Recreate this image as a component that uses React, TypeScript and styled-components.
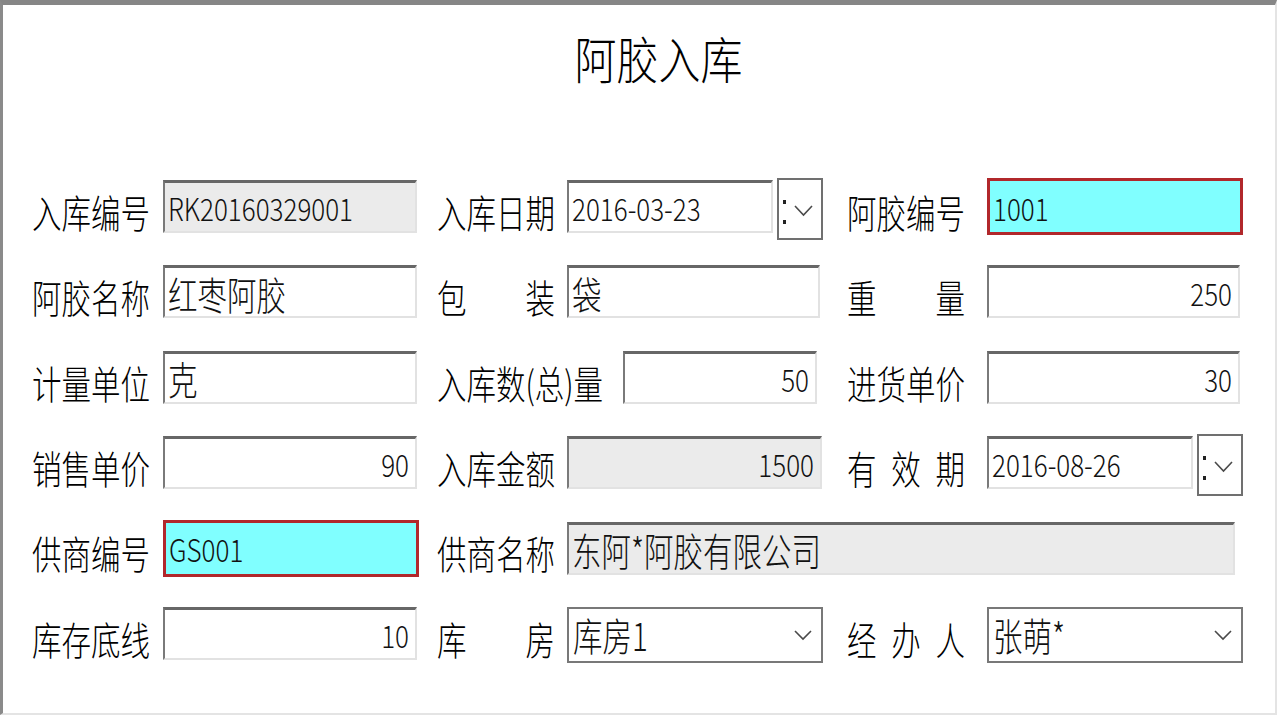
import React from "react";
import styled, { createGlobalStyle } from "styled-components";

const GlobalStyle = createGlobalStyle`
  html, body { margin: 0; padding: 0; background: #fff; }
  body { font-family: "Noto Sans CJK SC", "Liberation Sans", sans-serif; font-weight: 300; color: #000; }
`;

const Screen = styled.div`
  width: 1280px;
  height: 720px;
  background: #fff;
  overflow: hidden;
`;

const Window = styled.div`
  width: 1277px;
  height: 715px;
  box-sizing: border-box;
  border-top: 5px solid #868686;
  border-left: 3px solid #8a8a8a;
  border-right: 2px solid #e4e4e4;
  border-bottom: 2px solid #e4e4e4;
  display: flex;
  flex-direction: column;
`;

const Header = styled.div`
  height: 175px;
  box-sizing: border-box;
  display: flex;
  justify-content: center;
  padding-left: 39px;
  padding-top: 30px;
`;

const Title = styled.h1`
  margin: 0;
  font-size: 42px;
  font-weight: 300;
  line-height: 60px;
  letter-spacing: 0;
  transform: scaleY(1.18);
`;

const Form = styled.div`
  display: grid;
  grid-template-columns: 405px 410px 396px;
  grid-auto-rows: 53px;
  row-gap: 32.4px;
  padding-left: 29px;
`;

const Cell = styled.div<{ $pr: number; $span?: number }>`
  display: flex;
  align-items: center;
  min-width: 0;
  padding-right: ${(p) => p.$pr}px;
  grid-column: span ${(p) => p.$span ?? 1};
`;

const Label = styled.div<{ $w: number }>`
  flex: 0 0 ${(p) => p.$w}px;
  align-self: stretch;
  display: flex;
  align-items: center;
  padding-top: 10px;
  box-sizing: border-box;
`;

const LabelText = styled.div<{ $justify: boolean }>`
  display: flex;
  justify-content: space-between;
  width: ${(p) => (p.$justify ? "118px" : "auto")};
  font-size: 29.5px;
  line-height: 1;
  white-space: nowrap;
  transform: scaleY(1.3);
`;

type Variant = "normal" | "readonly" | "key";

const Field = styled.div<{ $v: Variant; $right?: boolean; $mr?: number }>`
  flex: 1;
  min-width: 0;
  height: ${(p) => (p.$v === "key" ? "57px" : "53px")};
  box-sizing: border-box;
  display: flex;
  align-items: center;
  justify-content: ${(p) => (p.$right ? "flex-end" : "flex-start")};
  padding: 2px 6px 0 3px;
  margin-right: ${(p) => p.$mr ?? 0}px;
  overflow: hidden;
  background: ${(p) => (p.$v === "readonly" ? "#ebebeb" : p.$v === "key" ? "#80ffff" : "#fff")};
  ${(p) =>
    p.$v === "key"
      ? `border: 3px solid #b1282b;`
      : `border-top: 3px solid #676767;
         border-left: 2px solid #7a7a7a;
         border-right: 2px solid #e2e2e2;
         border-bottom: 2px solid #e2e2e2;`}
`;

const FieldText = styled.span<{ $ascii: boolean }>`
  display: inline-block;
  white-space: nowrap;
  line-height: 1;
  font-size: ${(p) => (p.$ascii ? "26px" : "29.5px")};
  transform: scaleY(${(p) => (p.$ascii ? 1.2 : 1.3)});
  color: #111;
`;

const DateWrap = styled.div`
  flex: 1;
  display: flex;
  align-items: center;
  min-width: 0;
`;

const DropButton = styled.div`
  flex: 0 0 46px;
  height: 62px;
  margin-left: 4px;
  margin-top: 5px;
  box-sizing: border-box;
  border: 2px solid #707070;
  background: #fff;
  display: flex;
`;

const Select = styled.div`
  flex: 1;
  height: 56px;
  margin-top: 3px;
  box-sizing: border-box;
  border: 2px solid #787878;
  background: #fff;
  display: flex;
  align-items: center;
  justify-content: space-between;
  padding: 0 9px 0 4px;
`;

const isAscii = (s: string) => /^[\x00-\x7f]*$/.test(s);

const Text: React.FC<{ value: string }> = ({ value }) => (
  <FieldText $ascii={isAscii(value)}>{value}</FieldText>
);

const DateIcon = () => (
  <svg width="42" height="58" viewBox="0 0 42 58">
    <rect x="4" y="20" width="3" height="4" fill="#222" />
    <rect x="4" y="40" width="3" height="4" fill="#222" />
    <polyline points="16,26 24.5,35 33,26" fill="none" stroke="#4a4a4a" strokeWidth="1.6" />
  </svg>
);

const Chevron = () => (
  <svg width="18" height="12" viewBox="0 0 18 12">
    <polyline points="1,2 9,10 17,2" fill="none" stroke="#4a4a4a" strokeWidth="1.6" />
  </svg>
);

type Kind =
  | { type: "field"; value: string; v?: Variant; right?: boolean; mr?: number }
  | { type: "date"; value: string }
  | { type: "select"; value: string };

interface CellDef {
  label: string;
  chars?: string[];
  lw: number;
  pr: number;
  span?: number;
  kind: Kind;
}

const COL1 = { lw: 131, pr: 20 };
const COL2 = { lw: 130, pr: 24 };
const COL3 = { lw: 140, pr: 0 };

const rows: CellDef[][] = [
  [
    { label: "入库编号", ...COL1, kind: { type: "field", value: "RK20160329001", v: "readonly" } },
    { label: "入库日期", ...COL2, kind: { type: "date", value: "2016-03-23" } },
    { label: "阿胶编号", ...COL3, kind: { type: "field", value: "1001", v: "key" } },
  ],
  [
    { label: "阿胶名称", ...COL1, kind: { type: "field", value: "红枣阿胶" } },
    { label: "包装", chars: ["包", "装"], ...COL2, kind: { type: "field", value: "袋", mr: 3 } },
    { label: "重量", chars: ["重", "量"], ...COL3, kind: { type: "field", value: "250", right: true, mr: 3 } },
  ],
  [
    { label: "计量单位", ...COL1, kind: { type: "field", value: "克" } },
    { label: "入库数(总)量", ...COL2, lw: 186, kind: { type: "field", value: "50", right: true, mr: 6 } },
    { label: "进货单价", ...COL3, kind: { type: "field", value: "30", right: true, mr: 3 } },
  ],
  [
    { label: "销售单价", ...COL1, kind: { type: "field", value: "90", right: true } },
    { label: "入库金额", ...COL2, kind: { type: "field", value: "1500", v: "readonly", right: true, mr: 1 } },
    { label: "有效期", chars: ["有", "效", "期"], ...COL3, kind: { type: "date", value: "2016-08-26" } },
  ],
  [
    { label: "供商编号", ...COL1, kind: { type: "field", value: "GS001", v: "key", mr: -2 } },
    { label: "供商名称", ...COL2, pr: 8, span: 2, kind: { type: "field", value: "东阿*阿胶有限公司", v: "readonly" } },
  ],
  [
    { label: "库存底线", ...COL1, kind: { type: "field", value: "10", right: true } },
    { label: "库房", chars: ["库", "房"], ...COL2, kind: { type: "select", value: "库房1" } },
    { label: "经办人", chars: ["经", "办", "人"], ...COL3, kind: { type: "select", value: "张萌*" } },
  ],
];

const renderKind = (k: Kind) => {
  if (k.type === "date") {
    return (
      <DateWrap>
        <Field $v="normal">
          <Text value={k.value} />
        </Field>
        <DropButton>
          <DateIcon />
        </DropButton>
      </DateWrap>
    );
  }
  if (k.type === "select") {
    return (
      <Select>
        <Text value={k.value} />
        <Chevron />
      </Select>
    );
  }
  return (
    <Field $v={k.v ?? "normal"} $right={k.right} $mr={k.mr}>
      <Text value={k.value} />
    </Field>
  );
};

export default function App() {
  return (
    <Screen>
      <GlobalStyle />
      <Window>
        <Header>
          <Title>阿胶入库</Title>
        </Header>
        <Form>
          {rows.flat().map((c, i) => (
            <Cell key={i} $pr={c.pr} $span={c.span}>
              <Label $w={c.lw}>
                <LabelText $justify={!!c.chars || c.label.length === 4}>
                  {c.chars ? c.chars.map((ch) => <span key={ch}>{ch}</span>) : <span>{c.label}</span>}
                </LabelText>
              </Label>
              {renderKind(c.kind)}
            </Cell>
          ))}
        </Form>
      </Window>
    </Screen>
  );
}
